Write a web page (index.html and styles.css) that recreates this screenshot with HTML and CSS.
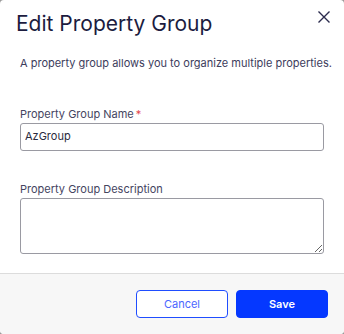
FILE: index.html
```html
<!DOCTYPE html>
<html lang="en">
<head>
<meta charset="utf-8">
<title>Edit Property Group</title>
<link rel="stylesheet" href="styles.css">
</head>
<body>
<div class="modal">
  <div class="modal-header">
    <h1 class="modal-title">Edit Property Group</h1>
    <button class="close-btn" aria-label="Close">
      <svg width="14" height="14" viewBox="0 0 14 14"><path d="M1.5 1.5 L12.5 12.5 M12.5 1.5 L1.5 12.5" stroke="#2b2b4d" stroke-width="1.4" fill="none"/></svg>
    </button>
  </div>
  <div class="modal-body">
    <p class="desc">A property group allows you to organize multiple properties.</p>
    <div class="field field-name">
      <label class="label">Property Group Name<span class="req">*</span></label>
      <input class="input" type="text" value="AzGroup">
    </div>
    <div class="field field-desc">
      <label class="label">Property Group Description</label>
      <textarea class="textarea"></textarea>
    </div>
  </div>
  <div class="modal-footer">
    <button class="btn btn-cancel">Cancel</button>
    <button class="btn btn-save">Save</button>
  </div>
</div>
</body>
</html>
```

FILE: styles.css
```css
html, body {
  margin: 0;
  padding: 0;
  background: #9a9a9a;
}
* { box-sizing: border-box; }
.modal {
  width: 344px;
  height: 334px;
  background: #ffffff;
  border-radius: 4px;
  overflow: hidden;
  display: flex;
  flex-direction: column;
  font-family: Inter, "Noto Sans", sans-serif;
}
.modal-header {
  display: flex;
  justify-content: space-between;
  align-items: flex-start;
  padding: 10px 13px 0 16px;
}
.modal-title {
  margin: 0;
  font-size: 21px;
  line-height: 28px;
  font-weight: 400;
  color: #1c1c3f;
}
.close-btn {
  border: none;
  background: none;
  padding: 0;
  margin-top: 0;
  width: 14px;
  height: 14px;
  display: flex;
  cursor: pointer;
}
.modal-body {
  flex: 1;
  padding: 17px 20px 0 20px;
}
.desc {
  margin: 0;
  font-size: 11px;
  line-height: 16px;
  color: #3c3c5c;
  white-space: nowrap;
}
.field { display: flex; flex-direction: column; }
.field-name { margin-top: 35px; }
.field-desc { margin-top: 30px; }
.label {
  font-size: 11px;
  line-height: 16px;
  color: #45455f;
  margin-bottom: 1px;
}
.req { color: #e5484d; margin-left: 2px; }
.input {
  height: 28px;
  width: 100%;
  border: 1px solid #9a9aa2;
  border-radius: 3px;
  padding: 0 4px 2px;
  font-family: Inter, "Noto Sans", sans-serif;
  font-size: 11px;
  color: #2b2b40;
  outline: none;
}
.textarea {
  height: 56px;
  width: 100%;
  border: 1px solid #9a9aa2;
  border-radius: 3px;
  resize: vertical;
  font-family: Inter, "Noto Sans", sans-serif;
  font-size: 11px;
  outline: none;
  display: block;
}
.modal-footer {
  height: 61px;
  border-top: 1px solid #dcdcdc;
  background: #f7f7f7;
  display: flex;
  justify-content: flex-end;
  align-items: flex-start;
  gap: 8px;
  padding: 16px 16px 0 0;
}
.btn {
  width: 92px;
  height: 28px;
  border-radius: 4px;
  font-family: Inter, "Noto Sans", sans-serif;
  font-size: 11px;
  cursor: pointer;
}
.btn-cancel {
  background: #ffffff;
  border: 1px solid #1f4dff;
  color: #4a66ff;
}
.btn-save {
  background: #0538ff;
  border: 1px solid #0538ff;
  color: #ffffff;
  font-weight: 600;
}
```
